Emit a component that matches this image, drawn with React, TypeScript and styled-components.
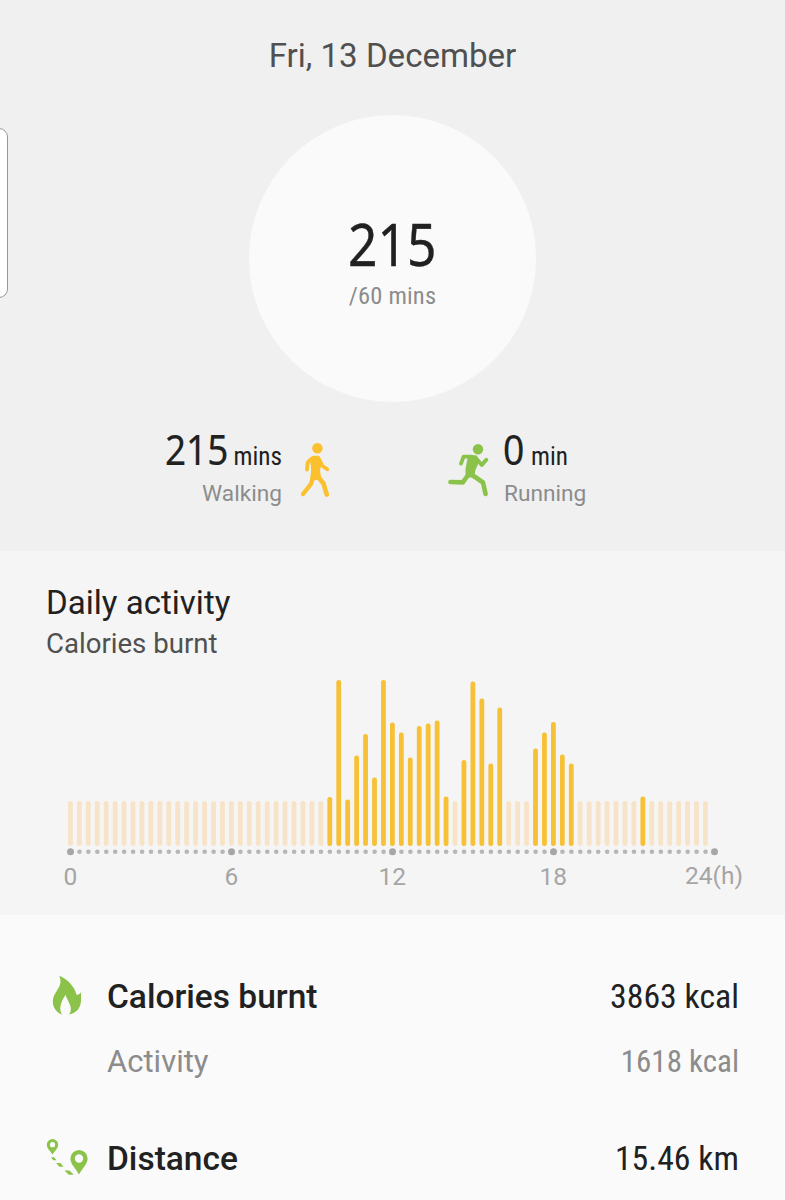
import React from "react";
import styled, { createGlobalStyle } from "styled-components";

const GlobalStyle = createGlobalStyle`
  * { box-sizing: border-box; }
  body {
    margin: 0;
    background: #fafafa;
    font-family: Roboto, "Liberation Sans", sans-serif;
    color: #212121;
  }
`;

const CONDENSED = `"Roboto Condensed", Roboto, sans-serif`;

const Screen = styled.main`
  position: relative;
  width: 785px;
  height: 1200px;
  overflow: hidden;
  display: flex;
  flex-direction: column;
`;

const EdgeHandle = styled.div`
  position: absolute;
  left: -12px;
  top: 128px;
  width: 20px;
  height: 170px;
  background: #fff;
  border: 1px solid #989898;
  border-radius: 9px;
`;

const Summary = styled.section`
  height: 551px;
  flex: none;
  background: #f0f0f0;
  display: flex;
  flex-direction: column;
  align-items: center;
`;

const DateTitle = styled.h1`
  margin: 36px 0 0;
  font-size: 33.1px;
  line-height: 40px;
  font-weight: 400;
  color: #505050;
  white-space: nowrap;
`;

const Goal = styled.div`
  margin-top: 39px;
  width: 287px;
  height: 287px;
  border-radius: 50%;
  background: #fafafa;
  display: flex;
  flex-direction: column;
  align-items: center;
  padding-top: 93px;
`;

const Squeeze = styled.span<{ $x: number; $origin?: string }>`
  display: inline-block;
  white-space: nowrap;
  transform: scaleX(${(p) => p.$x});
  transform-origin: ${(p) => p.$origin ?? "center"} center;
`;

const GoalValue = styled.div`
  font-family: "Noto Sans", sans-serif;
  font-size: 58.5px;
  line-height: 70px;
  -webkit-text-stroke: 0.4px #212121;
`;

const GoalTarget = styled.div`
  margin-top: 1px;
  font-family: ${CONDENSED};
  font-size: 24.5px;
  line-height: 34px;
  letter-spacing: 0.2px;
  color: #8c8c8c;
`;

const Modes = styled.div`
  margin-top: 23px;
  width: 785px;
  display: grid;
  grid-template-columns: 282px 66px 88px 67px 1fr;
`;

const ModeText = styled.div<{ $end?: boolean }>`
  display: flex;
  flex-direction: column;
  align-items: ${(p) => (p.$end ? "flex-end" : "flex-start")};
`;

const ModeValue = styled.div<{ $width: number }>`
  display: flex;
  align-items: baseline;
  justify-content: space-between;
  width: ${(p) => p.$width}px;
  height: 48px;
  line-height: 48px;
`;

const ModeNumber = styled.span<{ $width: number }>`
  width: ${(p) => p.$width}px;
  font-family: "Noto Sans", sans-serif;
  font-size: 41px;
  -webkit-text-stroke: 0.2px #212121;
`;

const ModeUnit = styled.span`
  font-family: ${CONDENSED};
  font-size: 25.2px;
`;

const ModeName = styled.div`
  margin-top: 3px;
  padding-left: 1px;
  font-size: 22.7px;
  line-height: 36px;
  color: #8c8c8c;
`;

const Icon = styled.svg<{ $drop?: number }>`
  display: block;
  margin-top: ${(p) => p.$drop ?? 0}px;
`;

const Activity = styled.section`
  height: 364px;
  flex: none;
  background: #f5f5f5;
  padding-top: 31px;
`;

const ActivityTitle = styled.h2`
  margin: 0 0 0 46px;
  font-size: 33.1px;
  line-height: 42px;
  font-weight: 400;
`;

const ActivitySubtitle = styled.div`
  margin-left: 46px;
  font-size: 27.6px;
  line-height: 40px;
  color: #505050;
`;

const Chart = styled.svg`
  display: block;
  margin-top: 16px;
`;

const Hours = styled.div`
  display: flex;
  margin-top: 3px;
  padding-left: 30px;
  font-size: 24.5px;
  line-height: 36px;
  color: #a5a5a5;
`;

const Hour = styled.span<{ $last?: boolean }>`
  flex: none;
  width: 81px;
  margin-right: 79.9px;
  text-align: center;
  margin-top: ${(p) => (p.$last ? -1 : 0)}px;
`;

const Stats = styled.section`
  flex: 1;
  background: #fafafa;
  padding: 54px 46px 0 46px;
`;

const StatRow = styled.div<{ $gap?: number }>`
  display: grid;
  grid-template-columns: 61px 1fr auto;
  align-items: center;
  height: 54px;
  margin-top: ${(p) => p.$gap ?? 0}px;
`;

const StatName = styled.span<{ $minor?: boolean }>`
  font-size: ${(p) => (p.$minor ? 31 : 33.5)}px;
  font-weight: ${(p) => (p.$minor ? 400 : 500)};
  color: ${(p) => (p.$minor ? "#8c8c8c" : "#212121")};
`;

const StatValue = styled.span<{ $minor?: boolean }>`
  font-family: ${CONDENSED};
  font-size: ${(p) => (p.$minor ? 31 : 33.8)}px;
  color: ${(p) => (p.$minor ? "#8c8c8c" : "#212121")};
`;

const BASE = 846;
const FIRST = 70.5;
const PITCH = 644 / 72;
const TOPS: Record<number, number> = {
  29: 797, 30: 680, 31: 799.5, 32: 755.5, 33: 734, 34: 777.5, 35: 680, 36: 722.5,
  37: 732.5, 38: 757.5, 39: 726, 40: 723.5, 41: 720.5, 42: 796.5, 44: 760,
  45: 681.5, 46: 698.5, 47: 763.5, 48: 707.5, 52: 748.5, 53: 732.5, 54: 722,
  55: 754.5, 56: 763.5, 64: 796.5,
};

function ActivityChart() {
  const slots = Array.from({ length: 73 }, (_, i) => i);
  return (
    <Chart width="785" height="176" viewBox="0 680 785 176">
      {slots.slice(0, 72).map((i) => {
        const top = TOPS[i] ?? 801;
        return (
          <rect
            key={i}
            x={FIRST + i * PITCH - 2.5}
            y={top}
            width={4.8}
            height={BASE - top}
            rx={2.2}
            fill={TOPS[i] ? "#f6c136" : "#f7e4c8"}
          />
        );
      })}
      {slots.map((i) => (
        <circle
          key={i}
          cx={FIRST + i * PITCH}
          cy={851.7}
          r={i % 18 === 0 ? 3.5 : 2.3}
          fill={i % 18 === 0 ? "#a6a6a6" : "#b6b6b6"}
        />
      ))}
    </Chart>
  );
}

function WalkIcon() {
  return (
    <Icon $drop={2} width="66" height="84" viewBox="282 427 66 84">
      <g fill="none" stroke="#fbc02d" strokeLinecap="round" strokeLinejoin="round">
        <circle cx="317.4" cy="448.3" r="5.2" fill="#fbc02d" stroke="none" />
        <path d="M312 458.5 307.6 462.5 307 469.5" strokeWidth="3.8" />
        <path d="M319.5 460 322.5 466 327.3 469.3" strokeWidth="3.8" />
        <path d="M313.5 475 311 484 303 494" strokeWidth="4.4" />
        <path d="M316.5 475 323.5 483.5 326.8 494.6" strokeWidth="4.6" />
        <path d="M313 457 318.5 457 320.5 461 318.8 471 320 478 316 478.5 311.5 480 312.3 470 311.5 460Z" fill="#fbc02d" strokeWidth="2.4" />
      </g>
    </Icon>
  );
}

function RunIcon() {
  return (
    <Icon $drop={2} width="67" height="84" viewBox="436 427 67 84">
      <g fill="none" stroke="#8bc34a" strokeLinecap="round" strokeLinejoin="round">
        <circle cx="478" cy="449.3" r="5.2" fill="#8bc34a" stroke="none" />
        <path d="M472 456.6 463.6 456.6 461 463.6" strokeWidth="3.8" />
        <path d="M477.5 460 481.8 465 486.3 459.8" strokeWidth="3.9" />
        <path d="M468.5 474.5 462.8 482.4 450.5 482" strokeWidth="4.6" />
        <path d="M471.5 474.5 483 482.5 485.6 494" strokeWidth="4.6" />
        <path d="M469 456.2 476 456.2 478.6 460.5 474.3 470 473.5 476 466.5 477 466.5 469Z" fill="#8bc34a" strokeWidth="2" />
      </g>
    </Icon>
  );
}

function FlameIcon() {
  return (
    <Icon width="61" height="54" viewBox="46 969 61 54">
      <path
        fill="#8bc34a"
        d="M59.2 975.8C66 978.5 74 985 76.6 994.8 78.5 994.8 80.2 993.6 81.2 992.2 80.5 995 81.6 999 80.8 1002.5 80 1008.5 76 1013.5 68.7 1014.6 71.2 1012.5 71.5 1008.5 69.8 1004.5 68.7 1001.5 66.5 998.5 65.6 994.8 63 998.5 60.5 1003.5 60.3 1008 60.2 1011 61 1013 62.4 1014.8 56 1012.5 52.8 1007 52.8 1001.5 53 994.5 57.5 991 59.7 985.5 61.2 981.8 60.3 978.5 59.2 975.8Z"
      />
    </Icon>
  );
}

function RouteIcon() {
  return (
    <Icon width="61" height="54" viewBox="46 1131 61 54">
      <g fill="#8bc34a" fillRule="evenodd">
        <path d="M52.5 1139a5.7 5.7 0 0 0-5.7 5.7c0 3.5 3.5 6.3 5.7 9.7 2.2-3.4 5.7-6.2 5.7-9.7a5.7 5.7 0 0 0-5.7-5.7Zm0 3.1a2.6 2.6 0 1 1 0 5.2a2.6 2.6 0 0 1 0-5.2Z" />
        <path d="M79 1150a8.6 8.6 0 0 0-8.6 8.6c0 5.5 5.4 10 8.6 16 3.2-6 8.6-10.5 8.6-16a8.6 8.6 0 0 0-8.6-8.6Zm0 4.3a4.2 4.2 0 1 1 0 8.4a4.2 4.2 0 0 1 0-8.4Z" />
        <path d="M51 1157.300h3.200l2.200 3h-3.200ZM56.200 1163h4.200l3.200 3.800h-4.200ZM64.400 1170.400h5l4.400 4.400h-5Z" />
      </g>
    </Icon>
  );
}

export default function App() {
  return (
    <Screen>
      <GlobalStyle />
      <Summary>
        <DateTitle>Fri, 13 December</DateTitle>
        <Goal>
          <GoalValue><Squeeze $x={0.88}>215</Squeeze></GoalValue>
          <GoalTarget>/60 mins</GoalTarget>
        </Goal>
        <Modes>
          <ModeText $end>
            <ModeValue $width={117}>
              <ModeNumber $width={64}><Squeeze $x={0.9} $origin="left">215</Squeeze></ModeNumber>
              <ModeUnit>mins</ModeUnit>
            </ModeValue>
            <ModeName>Walking</ModeName>
          </ModeText>
          <WalkIcon />
          <span />
          <RunIcon />
          <ModeText>
            <ModeValue $width={65}>
              <ModeNumber $width={24}><Squeeze $x={0.91} $origin="left">0</Squeeze></ModeNumber>
              <ModeUnit>min</ModeUnit>
            </ModeValue>
            <ModeName>Running</ModeName>
          </ModeText>
        </Modes>
      </Summary>
      <Activity>
        <ActivityTitle>Daily activity</ActivityTitle>
        <ActivitySubtitle>Calories burnt</ActivitySubtitle>
        <ActivityChart />
        <Hours>
          <Hour>0</Hour>
          <Hour>6</Hour>
          <Hour>12</Hour>
          <Hour>18</Hour>
          <Hour $last>24(h)</Hour>
        </Hours>
      </Activity>
      <Stats>
        <StatRow>
          <FlameIcon />
          <StatName>Calories burnt</StatName>
          <StatValue>3863 kcal</StatValue>
        </StatRow>
        <StatRow $gap={11}>
          <span />
          <StatName $minor>Activity</StatName>
          <StatValue $minor>1618 kcal</StatValue>
        </StatRow>
        <StatRow $gap={43}>
          <RouteIcon />
          <StatName>Distance</StatName>
          <StatValue>15.46 km</StatValue>
        </StatRow>
      </Stats>
      <EdgeHandle />
    </Screen>
  );
}
